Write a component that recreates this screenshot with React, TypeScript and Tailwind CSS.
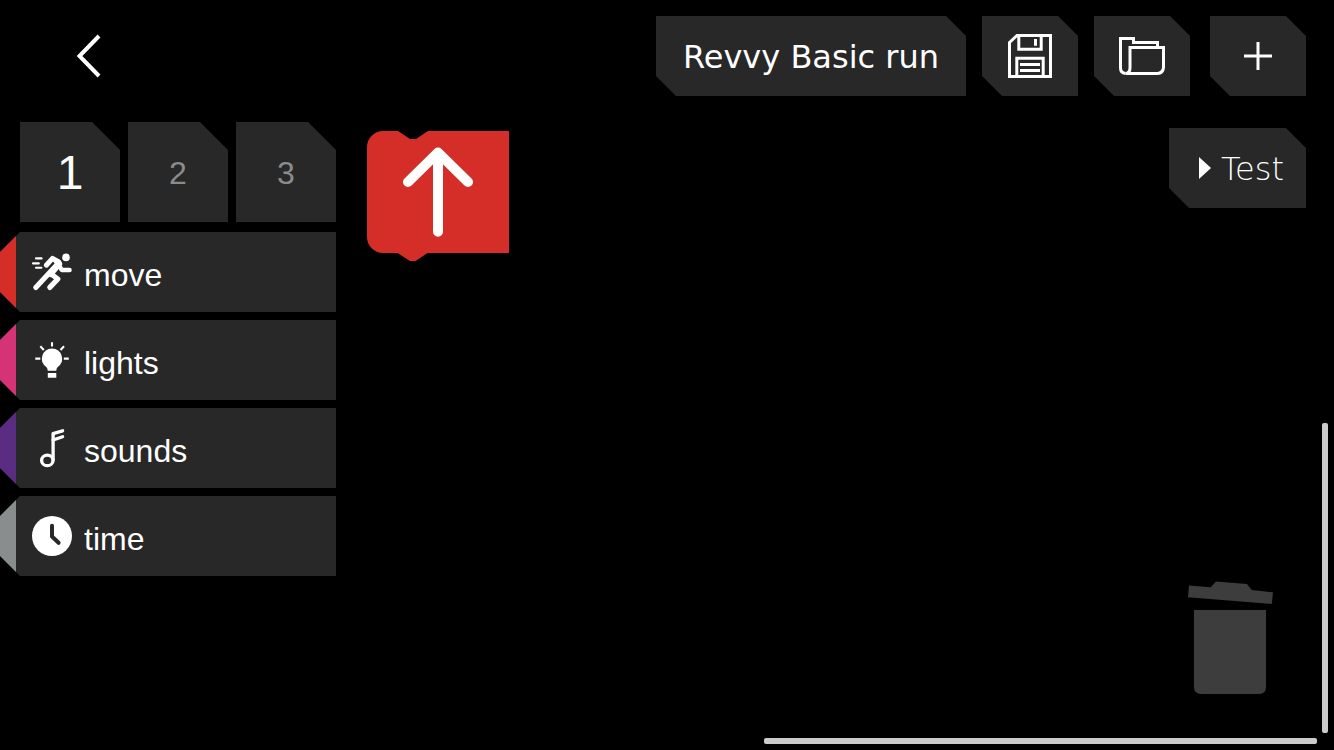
import React, { useState } from "react";

const cutCorners =
  "[clip-path:polygon(0_0,calc(100%-20px)_0,100%_20px,100%_100%,20px_100%,0_calc(100%-20px))]";

function BackIcon() {
  return (
    <svg width="26" height="44" viewBox="0 0 26 44" fill="none" stroke="currentColor" strokeWidth="4" aria-hidden="true">
      <path d="M24 2 L4.5 22 L24 42" />
    </svg>
  );
}

function SaveIcon() {
  return (
    <svg width="44" height="44" viewBox="0 0 44 44" fill="none" stroke="currentColor" strokeWidth="3" aria-hidden="true">
      <path d="M1.5 8.5 L9 1.5 H42.5 V42.5 H1.5 Z" />
      <path d="M10.8 1.5 V15.2 H33.2 V1.5" />
      <path d="M8.8 42.5 V24.2 H35.2 V42.5" />
      <path d="M27.5 5 V11.7 M12 30.5 H32 M12 36.5 H32" />
    </svg>
  );
}

function FolderIcon() {
  return (
    <svg width="46" height="38" viewBox="0 0 46 38" fill="none" stroke="currentColor" strokeWidth="3" aria-hidden="true">
      <path d="M6.5 36.5 Q1.5 36 1.5 31 V1.5 H14.5 V5.5 H38.5 V10.5" />
      <path d="M6.5 36.5 Q11 36 11 31 V10.5 H44.5 V30.5 Q44 36 38.5 36.5 Z" />
    </svg>
  );
}

function PlusIcon() {
  return (
    <svg width="28" height="28" viewBox="0 0 28 28" stroke="currentColor" strokeWidth="3" aria-hidden="true">
      <path d="M0 14 H28 M14 0 V28" />
    </svg>
  );
}

function PlayIcon() {
  return (
    <svg width="12" height="22" viewBox="0 0 12 22" fill="currentColor" aria-hidden="true">
      <path d="M0 0 L12 11 L0 22 Z" />
    </svg>
  );
}

function RunnerIcon() {
  return (
    <svg width="40" height="40" viewBox="0 0 40 40" fill="none" stroke="currentColor" strokeLinecap="round" strokeLinejoin="round" aria-hidden="true">
      <circle cx="34" cy="5.4" r="3.8" fill="currentColor" stroke="none" />
      <path d="M14.3 13.2 L20.5 6.4 L26 9.5" strokeWidth="5" />
      <path d="M27 10.5 L3.8 35.4" strokeWidth="5.2" />
      <path d="M24.5 9.5 L27.5 12 L18.5 22.5" strokeWidth="5.4" />
      <path d="M26.5 12 L29.7 18 H37.6" strokeWidth="4.4" />
      <path d="M18.5 21.5 L25.8 27 L17.8 35.4" strokeWidth="5.2" />
      <path d="M4 6.4 H9.6 M1 11.4 H6.8 M4 15.7 H9.4" strokeWidth="2.1" />
    </svg>
  );
}

function BulbIcon() {
  return (
    <svg width="40" height="40" viewBox="0 0 40 40" fill="none" stroke="currentColor" aria-hidden="true">
      <path
        d="M20 8.5 A10.2 10.2 0 0 1 25.5 27.2 Q24.3 28.4 24.3 30.7 H15.7 Q15.7 28.4 14.5 27.2 A10.2 10.2 0 0 1 20 8.5 Z"
        fill="currentColor"
        stroke="none"
      />
      <path d="M15.8 33 H24.3 V37.8 H15.8 Z" fill="currentColor" stroke="none" />
      <path d="M20 2.2 V6.4 M3.3 18.6 H8.3 M31.8 18.6 H36.8 M8.3 6.3 L11.8 9.9 M32 6.3 L28.5 9.9" strokeWidth="2.1" />
    </svg>
  );
}

function NoteIcon() {
  return (
    <svg width="40" height="40" viewBox="0 0 40 40" fill="none" stroke="currentColor" strokeWidth="3.3" strokeLinecap="round" strokeLinejoin="round" aria-hidden="true">
      <ellipse cx="15.3" cy="32.4" rx="5.7" ry="5.3" />
      <path d="M21.1 32 V5.6 L30.6 2.8" />
      <path d="M21.1 12 L30.6 8.8" />
    </svg>
  );
}

function ClockIcon() {
  return (
    <svg width="40" height="40" viewBox="0 0 40 40" fill="none" aria-hidden="true">
      <circle cx="20" cy="20" r="20" fill="currentColor" />
      <path d="M20 9.8 V20.5 L26.6 26.8" stroke="#282828" strokeWidth="4" strokeLinecap="round" strokeLinejoin="round" />
    </svg>
  );
}

function ForwardBlock() {
  return (
    <svg width="142" height="130" viewBox="0 0 142 130" aria-hidden="true">
      <path
        d="M16 0 H31 L43 8 H49 L61 0 H142 V122 H60.5 L48.5 130 H43 L30.5 122 H16 A16 16 0 0 1 0 106 V16 A16 16 0 0 1 16 0 Z"
        fill="#d52d28"
      />
      <path
        d="M41 51 L71 21.5 L101 51 M71 23 V100.7"
        fill="none"
        stroke="#fff"
        strokeWidth="10"
        strokeLinecap="round"
        strokeLinejoin="round"
      />
    </svg>
  );
}

function TrashIcon() {
  return (
    <svg width="86" height="113" viewBox="0 0 86 113" fill="#3d3d3d" aria-hidden="true">
      <path d="M2 4.5 L23.7 6.3 L29 0.6 L60 3 L64.7 9 L86 11.3 L84.8 23 L1 16.3 Z" />
      <path d="M7 29 H79 V106 Q79 113 72 113 H14 Q7 113 7 106 Z" />
    </svg>
  );
}

const categories = [
  { name: "move", marker: "bg-[#d52d28]", Icon: RunnerIcon },
  { name: "lights", marker: "bg-[#d53376]", Icon: BulbIcon },
  { name: "sounds", marker: "bg-[#5b2d82]", Icon: NoteIcon },
  { name: "time", marker: "bg-[#8a8d8d]", Icon: ClockIcon },
];

function IconButton({ label, children }: { label: string; children: React.ReactNode }) {
  return (
    <button aria-label={label} className={`flex h-20 w-24 items-center justify-center bg-[#282828] ${cutCorners}`}>
      {children}
    </button>
  );
}

export default function App() {
  const [level, setLevel] = useState(1);

  return (
    <div className="relative flex min-h-screen flex-col overflow-hidden bg-black font-['Liberation_Sans',Arial,sans-serif] text-white">
      <header className="flex items-start justify-between pt-4 pr-7 pl-[75px]">
        <button aria-label="Back" className="flex h-20 items-center">
          <BackIcon />
        </button>
        <div className="flex gap-4">
          <button
            className={`h-20 bg-[#282828] px-[27px] pt-[2px] font-['DejaVu_Sans',sans-serif] text-[32px] whitespace-nowrap ${cutCorners}`}
          >
            Revvy Basic run
          </button>
          <IconButton label="Save">
            <SaveIcon />
          </IconButton>
          <div className="flex gap-5">
            <IconButton label="Open">
              <FolderIcon />
            </IconButton>
            <IconButton label="New">
              <PlusIcon />
            </IconButton>
          </div>
        </div>
      </header>

      <div className="flex flex-1 items-start pt-[26px]">
        <aside className="flex w-[336px] shrink-0 flex-col gap-[10px]">
          <div className="flex gap-2 pl-5">
            {[1, 2, 3].map((n) => (
              <button
                key={n}
                onClick={() => setLevel(n)}
                aria-pressed={level === n}
                className={`h-[100px] flex-1 bg-[#282828] pt-[2px] [clip-path:polygon(0_0,calc(100%-28px)_0,100%_28px,100%_100%,0_100%)] ${
                  level === n ? "text-[48px] text-white" : "text-[32px] text-[#8b8b8b]"
                }`}
              >
                {n}
              </button>
            ))}
          </div>
          <nav className="flex flex-col gap-2">
            {categories.map(({ name, marker, Icon }) => (
              <button
                key={name}
                className="flex h-20 items-center bg-[#282828] text-[32px] [clip-path:polygon(0_20px,20px_0,100%_0,100%_100%,20px_100%,0_60px)]"
              >
                <span className={`w-4 self-stretch ${marker}`} />
                <span className="flex items-center gap-3 pl-4">
                  <Icon />
                  <span className="pt-[6px]">{name}</span>
                </span>
              </button>
            ))}
          </nav>
        </aside>

        <main className="flex flex-1 items-start justify-between pr-7 pl-[31px]">
          <button aria-label="Forward" className="pt-[9px]">
            <ForwardBlock />
          </button>
          <button
            className={`mt-[6px] flex h-20 items-center gap-[10px] bg-[#282828] pr-[22px] pl-[30px] font-['DejaVu_Sans',sans-serif] text-[32px] font-extralight ${cutCorners}`}
          >
            <PlayIcon />
            <span className="pt-[2px]">Test</span>
          </button>
        </main>
      </div>

      <button aria-label="Delete" className="absolute right-[61px] bottom-14">
        <TrashIcon />
      </button>
      <div className="absolute right-[6px] bottom-[17px] h-[310px] w-[6px] rounded-[2px] bg-[#cbcbcb]" />
      <div className="absolute right-[17px] bottom-[6px] h-[6px] w-[553px] rounded-[2px] bg-[#cbcbcb]" />
    </div>
  );
}
